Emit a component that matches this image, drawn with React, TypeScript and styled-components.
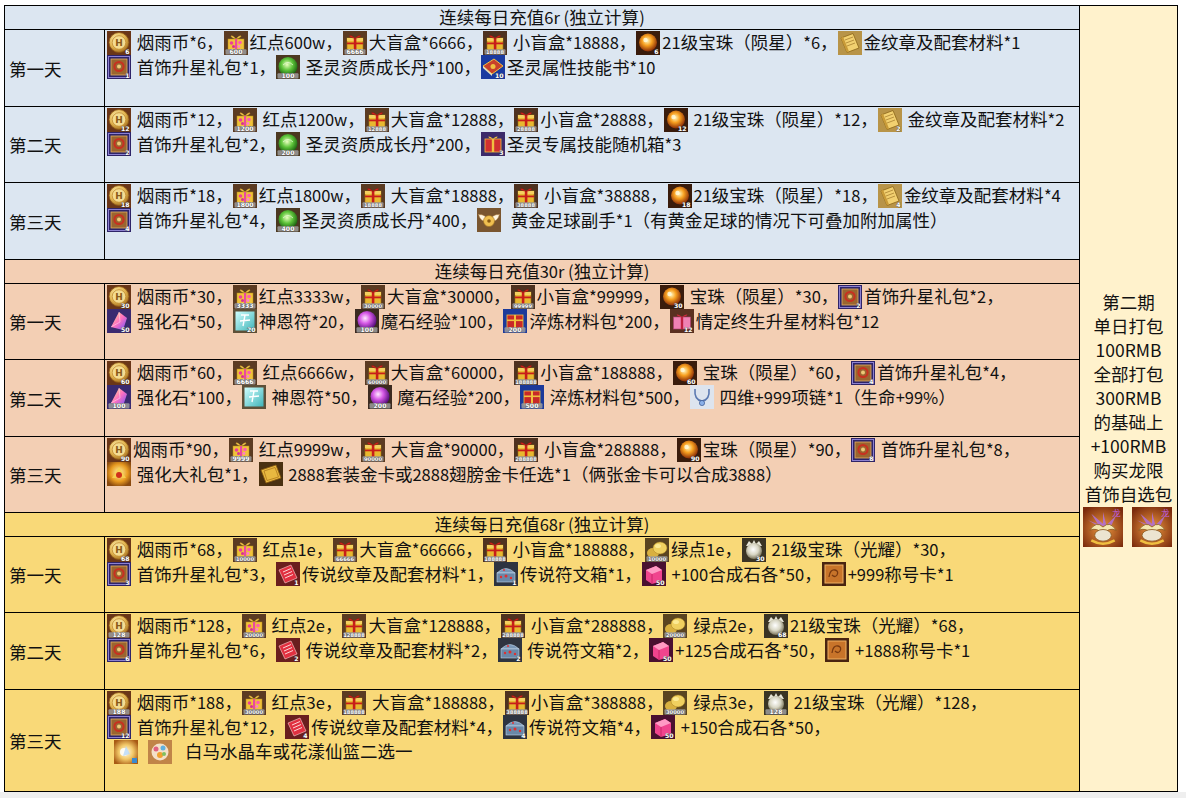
import React, { useId } from 'react';
import styled, { createGlobalStyle } from 'styled-components';

const GlobalStyle = createGlobalStyle`
  html, body { margin: 0; padding: 0; background: #ffffff; }
  body {
    font-family: "Noto Sans CJK SC", "Noto Sans", sans-serif;
    color: #111;
  }
  * { box-sizing: border-box; }
`;

const Page = styled.div`
  padding: 5px 0 0 4px;
`;

const Sheet = styled.div`
  display: flex;
  width: max-content;
  border-top: 1px solid #000;
  border-left: 1px solid #000;
`;

const Main = styled.div`
  display: flex;
  flex-direction: column;
  width: 1075px;
`;

const Section = styled.div<{ $bg: string }>`
  display: flex;
  flex-direction: column;
  background: ${(p) => p.$bg};
`;

const Header = styled.div`
  height: 24px;
  border-right: 1px solid #000;
  border-bottom: 1px solid #000;
  text-align: center;
  font-size: 17.5px;
  line-height: 22px;
  white-space: pre;
`;

const Row = styled.div<{ $h: number }>`
  display: grid;
  grid-template-columns: 100px 975px;
  height: ${(p) => p.$h}px;
`;

const Label = styled.div`
  display: flex;
  align-items: center;
  padding-left: 4px;
  border-right: 1px solid #000;
  border-bottom: 1px solid #000;
  font-size: 17.5px;
`;

const Content = styled.div`
  padding: 0 0 0 2px;
  border-right: 1px solid #000;
  border-bottom: 1px solid #000;
  font-size: 17.5px;
  overflow: hidden;
`;

const Line = styled.div`
  height: 24.5px;
  line-height: 24.5px;
  white-space: pre;
`;

const Latin = styled.span`
  font-size: 16.5px;
`;

const Side = styled.div`
  width: 98px;
  background: #fff2cc;
  border-right: 1px solid #000;
  border-bottom: 1px solid #000;
  display: flex;
  flex-direction: column;
  align-items: center;
  justify-content: center;
  padding-top: 39px;
  font-size: 17.5px;
`;

const SideLine = styled.div`
  line-height: 24px;
  white-space: nowrap;
`;

const SideIcons = styled.div`
  display: flex;
  gap: 7px;
  margin-top: 4px;
`;

const IconSvg = styled.svg`
  display: inline-block;
  vertical-align: middle;
  margin: -3px 2px 0 0;
`;

const Footer = styled.div`
  height: 12px;
  margin-left: -4px;
  background: #efefef;
`;

type Item = [string, string, string];

function Mixed({ text }: { text: string }) {
  const parts = text.split(/([\u0020-\u007e]+)/).filter((p) => p !== '');
  return (
    <>
      {parts.map((p, i) => (/^[\u0020-\u007e]+$/.test(p) ? <Latin key={i}>{p}</Latin> : <React.Fragment key={i}>{p}</React.Fragment>))}
    </>
  );
}

function Num({ n }: { n: string }) {
  if (!n) return null;
  const long = n.length >= 3;
  return (
    <>
      {long && <rect x="1.5" y="18.3" width="21" height="5.2" rx="1" fill="#9c9c9c" opacity="0.85" />}
      <text
        x={long ? 12 : 22.5}
        y="23"
        textAnchor={long ? 'middle' : 'end'}
        fontSize={n.length >= 5 ? 5.2 : 6.2}
        fontFamily="DejaVu Sans"
        fontWeight="bold"
        fill="#fff"
        stroke="#333"
        strokeWidth="0.5"
        paintOrder="stroke"
      >
        {n}
      </text>
    </>
  );
}

function Icon({ kind, n = '', size = 24 }: { kind: string; n?: string; size?: number }) {
  const uid = useId().replace(/[^a-zA-Z0-9]/g, '');
  const g = (s: string) => `${uid}${s}`;
  const u = (s: string) => `url(#${uid}${s})`;
  let body: React.ReactNode = null;
  switch (kind) {
    case 'coin':
      body = (
        <>
          <defs>
            <radialGradient id={g('a')} cx="40%" cy="35%" r="70%">
              <stop offset="0" stopColor="#fff2b8" />
              <stop offset="0.6" stopColor="#e2b450" />
              <stop offset="1" stopColor="#9a6418" />
            </radialGradient>
          </defs>
          <rect width="24" height="24" fill="#6a3618" />
          <circle cx="12" cy="11.5" r="10" fill={u('a')} stroke="#8a5414" strokeWidth="0.8" />
          <circle cx="12" cy="11.5" r="6.8" fill="#f4dc92" stroke="#c08a2c" strokeWidth="0.8" />
          <text x="12" y="15" textAnchor="middle" fontSize="9" fontWeight="bold" fontFamily="DejaVu Sans" fill="#8a5a18">H</text>
        </>
      );
      break;
    case 'redpt':
      body = (
        <>
          <rect width="24" height="24" fill="#5b3b22" />
          <path d="M12 8 C7 2 4 6 12 8 Z M12 8 C17 2 20 6 12 8 Z" fill="#f4d25a" stroke="#c89020" strokeWidth="0.5" />
          <rect x="4" y="8" width="16" height="10.5" fill="#f0c23a" stroke="#b88a18" strokeWidth="0.5" />
          <rect x="11" y="8" width="2.2" height="10.5" fill="#e84aa0" />
          <circle cx="7.5" cy="12" r="1.8" fill="#ee3c9c" />
          <circle cx="16" cy="11.5" r="1.8" fill="#ff5ab0" />
          <circle cx="9.5" cy="15.5" r="1.5" fill="#d83090" />
          <circle cx="15" cy="15.5" r="1.4" fill="#ff80c8" />
        </>
      );
      break;
    case 'bigbox':
    case 'smallbox':
      body = (
        <>
          <rect width="24" height="24" fill={kind === 'bigbox' ? '#5b3b22' : '#4e3220'} />
          <rect x="4" y="7" width="16" height="12" fill="#e8b830" stroke="#a07010" strokeWidth="0.6" />
          <rect x="4" y="7" width="16" height="3" fill="#f4d060" />
          <rect x="10.8" y="7" width="2.6" height="12" fill="#c81e1a" />
          <rect x="4" y="11.5" width="16" height="1.8" fill="#c81e1a" />
          <path d="M12 7.2 C6 1.5 3.5 6.5 12 7.2 Z M12.2 7.2 C18 1.5 20.5 6.5 12.2 7.2 Z" fill="#d8261e" stroke="#8a1010" strokeWidth="0.4" />
        </>
      );
      break;
    case 'orb':
      body = (
        <>
          <defs>
            <radialGradient id={g('a')} cx="45%" cy="40%" r="60%">
              <stop offset="0" stopColor="#fff8c0" />
              <stop offset="0.45" stopColor="#f7a020" />
              <stop offset="1" stopColor="#8a2c06" />
            </radialGradient>
          </defs>
          <rect width="24" height="24" fill="#3a1c0c" />
          <circle cx="12" cy="11.5" r="9" fill={u('a')} />
          <circle cx="9.5" cy="9" r="2.2" fill="#fffbe0" opacity="0.8" />
        </>
      );
      break;
    case 'scroll':
      body = (
        <>
          <rect width="24" height="24" fill="#b89448" />
          <path d="M3 7 L15 2.5 L21 17 L9 21.5 Z" fill="#f2d070" stroke="#8a6418" strokeWidth="0.8" />
          <path d="M7 9 L15 6 M8 12 L16 9 M9 15 L17 12" stroke="#a88030" strokeWidth="0.8" />
          <path d="M3 7 L5 5.5 L11 20.5 L9 21.5 Z" fill="#c89a38" />
        </>
      );
      break;
    case 'frame':
      body = (
        <>
          <rect width="24" height="24" fill="#2e2468" />
          <rect x="1.5" y="1.5" width="21" height="21" fill="none" stroke="#8c80d0" strokeWidth="1" />
          <rect x="4" y="4" width="16" height="16" fill="#9a6530" stroke="#e0b060" strokeWidth="0.8" />
          <circle cx="12" cy="11.5" r="4.6" fill="none" stroke="#c83020" strokeWidth="2" />
          <circle cx="12" cy="11.5" r="2" fill="#ecc878" />
        </>
      );
      break;
    case 'green':
      body = (
        <>
          <defs>
            <radialGradient id={g('a')} cx="45%" cy="40%" r="60%">
              <stop offset="0" stopColor="#eaffc0" />
              <stop offset="0.5" stopColor="#5ec43a" />
              <stop offset="1" stopColor="#1a6010" />
            </radialGradient>
          </defs>
          <rect width="24" height="24" fill="#4b3820" />
          <circle cx="12" cy="11.5" r="9.5" fill={u('a')} />
          <path d="M7 10 Q12 5 17 10" stroke="#f0ffe0" strokeWidth="1" fill="none" opacity="0.7" />
        </>
      );
      break;
    case 'book':
      body = (
        <>
          <rect width="24" height="24" fill="#1a3aa0" />
          <path d="M2 11 L13 4 L22 11 L11 19 Z" fill="#c8402a" stroke="#f0c040" strokeWidth="1" />
          <path d="M2 11 L11 19 L11 21 L2 13 Z" fill="#e8e0c0" />
          <circle cx="12" cy="11.5" r="2.5" fill="#f0c040" />
        </>
      );
      break;
    case 'redchest':
      body = (
        <>
          <rect width="24" height="24" fill="#3c2a6a" />
          <rect x="4" y="7" width="16" height="13" fill="#d03030" stroke="#f0c040" strokeWidth="0.8" />
          <rect x="10.8" y="7" width="2.4" height="13" fill="#f0c040" />
          <path d="M12 7 C7 2 5 6 12 7 Z M12 7 C17 2 19 6 12 7 Z" fill="#f0c040" />
        </>
      );
      break;
    case 'ball':
      body = (
        <>
          <rect width="24" height="24" fill="#7a5630" />
          <path d="M11 12 C6 4 2 8 1.5 6 C3 12 6 14 11 13 Z" fill="#fff6e0" stroke="#c09050" strokeWidth="0.5" />
          <path d="M13 12 C18 4 22 8 22.5 6 C21 12 18 14 13 13 Z" fill="#fff6e0" stroke="#c09050" strokeWidth="0.5" />
          <circle cx="12" cy="13" r="5.5" fill="#f0c050" stroke="#a07020" strokeWidth="0.6" />
          <circle cx="12" cy="13" r="1.8" fill="#8a5a10" />
        </>
      );
      break;
    case 'crystal':
      body = (
        <>
          <defs>
            <linearGradient id={g('a')} x1="0" y1="0" x2="1" y2="1">
              <stop offset="0" stopColor="#ffe880" />
              <stop offset="0.5" stopColor="#ff70c0" />
              <stop offset="1" stopColor="#6a50ff" />
            </linearGradient>
          </defs>
          <rect width="24" height="24" fill="#3a2a70" />
          <path d="M4 18 L12 3 L20 9 L16 21 Z" fill={u('a')} />
          <path d="M12 3 L13 13 L4 18" stroke="#fff" strokeWidth="0.6" fill="none" opacity="0.7" />
        </>
      );
      break;
    case 'rune':
      body = (
        <>
          <defs>
            <linearGradient id={g('a')} x1="0" y1="0" x2="1" y2="1">
              <stop offset="0" stopColor="#d0ffff" />
              <stop offset="1" stopColor="#40b4b8" />
            </linearGradient>
          </defs>
          <rect width="24" height="24" fill="#5e5038" />
          <rect x="2.5" y="2.5" width="19" height="19" fill={u('a')} />
          <path d="M8 6 L16 6 M12 6 L10 17 M7 12 L17 11" stroke="#ffffff" strokeWidth="1.4" fill="none" />
        </>
      );
      break;
    case 'purple':
      body = (
        <>
          <defs>
            <radialGradient id={g('a')} cx="40%" cy="38%" r="62%">
              <stop offset="0" stopColor="#ffe8ff" />
              <stop offset="0.45" stopColor="#d65ae6" />
              <stop offset="1" stopColor="#5a1080" />
            </radialGradient>
          </defs>
          <rect width="24" height="24" fill="#3b2a20" />
          <circle cx="12" cy="11.5" r="9.5" fill={u('a')} />
        </>
      );
      break;
    case 'bluebox':
      body = (
        <>
          <rect width="24" height="24" fill="#1c3a9a" />
          <rect x="4" y="6" width="16" height="14" fill="#c82828" stroke="#f0c040" strokeWidth="0.8" />
          <rect x="4" y="10.5" width="16" height="1.6" fill="#f0c040" />
          <rect x="11" y="6" width="2" height="14" fill="#f0c040" />
        </>
      );
      break;
    case 'pinkbox':
      body = (
        <>
          <rect width="24" height="24" fill="#5a3020" />
          <rect x="3.5" y="8" width="17" height="12" fill="#f082b4" stroke="#b04070" strokeWidth="0.6" />
          <rect x="10.8" y="8" width="2.4" height="12" fill="#c02040" />
          <path d="M12 8 C6 3 4 7 12 8 Z M12 8 C18 3 20 7 12 8 Z" fill="#d0283c" />
        </>
      );
      break;
    case 'necklace':
      body = (
        <>
          <rect width="24" height="24" fill="#dde4ee" />
          <path d="M5 4 Q4 15 12 16 Q20 15 19 4" stroke="#5a78b0" strokeWidth="1.6" fill="none" />
          <circle cx="12" cy="18" r="2.6" fill="#8ab0e8" stroke="#3a5890" strokeWidth="0.7" />
        </>
      );
      break;
    case 'goldgift':
      body = (
        <>
          <defs>
            <radialGradient id={g('a')} cx="50%" cy="45%" r="60%">
              <stop offset="0" stopColor="#fff4a8" />
              <stop offset="0.6" stopColor="#e89a20" />
              <stop offset="1" stopColor="#8a4a10" />
            </radialGradient>
          </defs>
          <rect width="24" height="24" fill={u('a')} />
          <path d="M5 16 L12 5 L19 16 Z" fill="#f6d050" opacity="0.9" />
          <circle cx="12" cy="13" r="3" fill="#d0301c" />
        </>
      );
      break;
    case 'goldcard':
      body = (
        <>
          <rect width="24" height="24" fill="#4a3010" />
          <path d="M2 8 L17 3 L22 16 L7 21 Z" fill="#e8b840" stroke="#8a5a10" strokeWidth="0.8" />
          <path d="M5 9 L16 5.5 L19.5 15 L8 18.5 Z" fill="none" stroke="#a87018" strokeWidth="0.7" />
        </>
      );
      break;
    case 'greenpt':
      body = (
        <>
          <rect width="24" height="24" fill="#5a4420" />
          <ellipse cx="8" cy="15" rx="6" ry="5" fill="#d8b040" />
          <ellipse cx="15" cy="10" rx="7" ry="6" fill="#f0d060" stroke="#a88020" strokeWidth="0.5" />
          <ellipse cx="13" cy="8" rx="3" ry="2" fill="#fff0a0" opacity="0.8" />
        </>
      );
      break;
    case 'silver':
      body = (
        <>
          <defs>
            <radialGradient id={g('a')} cx="45%" cy="40%" r="60%">
              <stop offset="0" stopColor="#ffffff" />
              <stop offset="0.55" stopColor="#d8d6c4" />
              <stop offset="1" stopColor="#7a745a" />
            </radialGradient>
          </defs>
          <rect width="24" height="24" fill="#3a3424" />
          <path d="M4 8 L7 3 L10 6 L12 2 L14 6 L17 3 L20 8 Z" fill="#e8e6d8" />
          <circle cx="12" cy="13" r="8" fill={u('a')} />
        </>
      );
      break;
    case 'redcard':
      body = (
        <>
          <rect width="24" height="24" fill="#6a1e1e" />
          <path d="M3 8 L15 3 L21 16 L9 21 Z" fill="#e03040" stroke="#ffd0d0" strokeWidth="0.6" />
          <path d="M7 10 L15 6.5 M8 13 L16 9.5 M9 16 L17 12.5" stroke="#ffe8e8" strokeWidth="0.9" />
        </>
      );
      break;
    case 'chest':
      body = (
        <>
          <rect width="24" height="24" fill="#2e3440" />
          <path d="M3 11 Q12 2 21 11 Z" fill="#7a98b8" stroke="#c0d4e8" strokeWidth="0.6" />
          <rect x="3" y="11" width="18" height="9" fill="#6a88a8" stroke="#c0d4e8" strokeWidth="0.6" />
          <circle cx="7" cy="15" r="1.2" fill="#e03030" />
          <circle cx="12" cy="14" r="1.5" fill="#e03030" />
          <circle cx="17" cy="16" r="1.2" fill="#e03030" />
          <circle cx="10" cy="8" r="1" fill="#e03030" />
        </>
      );
      break;
    case 'pinkstone':
      body = (
        <>
          <rect width="24" height="24" fill="#4a1030" />
          <path d="M4 8 L14 4 L20 8 L20 19 L10 22 L4 18 Z" fill="#f0448e" />
          <path d="M4 8 L14 4 L20 8 L10 12 Z" fill="#ff9ac4" />
          <path d="M10 12 L10 22" stroke="#c02060" strokeWidth="0.8" />
        </>
      );
      break;
    case 'titlecard':
      body = (
        <>
          <rect width="24" height="24" fill="#4a2410" />
          <rect x="3" y="3" width="18" height="18" fill="#c8742a" stroke="#f0b060" strokeWidth="1" />
          <path d="M7 15 Q8 7 13 8 Q17 9 15 13 Q13 16 10 13" stroke="#7a3a10" strokeWidth="1.3" fill="none" />
        </>
      );
      break;
    case 'carriage':
      body = (
        <>
          <defs>
            <radialGradient id={g('a')} cx="50%" cy="50%" r="60%">
              <stop offset="0" stopColor="#fffbe8" />
              <stop offset="0.5" stopColor="#f2c868" />
              <stop offset="1" stopColor="#a85a14" />
            </radialGradient>
          </defs>
          <rect width="24" height="24" fill={u('a')} />
          <circle cx="10" cy="12" r="4" fill="#ffffff" opacity="0.85" />
          <path d="M12 6 L16 14 L9 16 Z" fill="#b8d8f8" opacity="0.8" />
          <rect x="18" y="18" width="5" height="5" fill="#3a8ad0" />
        </>
      );
      break;
    case 'basket':
      body = (
        <>
          <rect width="24" height="24" fill="#c08448" />
          <circle cx="12" cy="12" r="8.5" fill="#f4e0c8" />
          <circle cx="8" cy="9" r="2.5" fill="#e06080" />
          <circle cx="15" cy="8" r="2.5" fill="#60b0e0" />
          <circle cx="12" cy="15" r="3" fill="#f0a030" />
          <circle cx="16" cy="14" r="2" fill="#80c060" />
        </>
      );
      break;
    case 'dragon1':
    case 'dragon2':
      body = (
        <>
          <defs>
            <radialGradient id={g('a')} cx="50%" cy="55%" r="65%">
              <stop offset="0" stopColor="#f09a40" />
              <stop offset="1" stopColor="#7a2a0c" />
            </radialGradient>
          </defs>
          <rect width="24" height="24" fill={u('a')} />
          <path d="M3 8 L10 12 L5 4 L12 10 L12 3 L14 11 L20 5 L16 13 Z" fill="#b070d0" opacity="0.9" />
          <path d="M4 14 Q8 8 12 12 Q16 8 20 14 Q16 12 12 16 Q8 12 4 14 Z" fill="#f4e8b0" stroke="#8a5a20" strokeWidth="0.5" />
          <ellipse cx="12" cy="17" rx={kind === 'dragon1' ? 5 : 6} ry="3.5" fill="#ece4d0" stroke="#8a5a20" strokeWidth="0.5" />
          <path d="M5 20 Q12 24 19 20" stroke="#f0c040" strokeWidth="1.5" fill="none" />
          <text x="22.5" y="5.5" textAnchor="end" fontSize="5" fill="#c060e0" fontFamily="Noto Sans CJK SC">龙</text>
        </>
      );
      break;
    default:
      body = <rect width="24" height="24" fill="#888" />;
  }
  return (
    <IconSvg width={size} height={size} viewBox="0 0 24 24">
      {body}
      <Num n={n} />
    </IconSvg>
  );
}

type DayRow = { day: string; h: number; lines: Item[][] };
type SectionData = { title: string; bg: string; rows: DayRow[] };

const sections: SectionData[] = [
  {
    title: '连续每日充值6r (独立计算)',
    bg: '#dce6f1',
    rows: [
      {
        day: '第一天',
        h: 77,
        lines: [
          [
            ['coin', '6', ' 烟雨币*6，'],
            ['redpt', '600', '红点600w，'],
            ['bigbox', '6666', '大盲盒*6666，'],
            ['smallbox', '18888', ' 小盲盒*18888，'],
            ['orb', '6', '21级宝珠（陨星）*6，'],
            ['scroll', '', '金纹章及配套材料*1'],
          ],
          [
            ['frame', '1', ' 首饰升星礼包*1，'],
            ['green', '100', ' 圣灵资质成长丹*100，'],
            ['book', '10', '圣灵属性技能书*10'],
          ],
        ],
      },
      {
        day: '第二天',
        h: 76,
        lines: [
          [
            ['coin', '12', ' 烟雨币*12，'],
            ['redpt', '1200', ' 红点1200w，'],
            ['bigbox', '12888', '大盲盒*12888，'],
            ['smallbox', '28888', '小盲盒*28888，'],
            ['orb', '12', ' 21级宝珠（陨星）*12，'],
            ['scroll', '2', ' 金纹章及配套材料*2'],
          ],
          [
            ['frame', '2', ' 首饰升星礼包*2，'],
            ['green', '200', ' 圣灵资质成长丹*200，'],
            ['redchest', '3', '圣灵专属技能随机箱*3'],
          ],
        ],
      },
      {
        day: '第三天',
        h: 77,
        lines: [
          [
            ['coin', '18', ' 烟雨币*18，'],
            ['redpt', '1800', '红点1800w，'],
            ['bigbox', '18888', ' 大盲盒*18888，'],
            ['smallbox', '38888', ' 小盲盒*38888，'],
            ['orb', '18', '21级宝珠（陨星）*18，'],
            ['scroll', '4', '金纹章及配套材料*4'],
          ],
          [
            ['frame', '4', ' 首饰升星礼包*4，'],
            ['green', '400', '圣灵资质成长丹*400，'],
            ['ball', '', '  黄金足球副手*1（有黄金足球的情况下可叠加附加属性）'],
          ],
        ],
      },
    ],
  },
  {
    title: '连续每日充值30r (独立计算)',
    bg: '#f3cfb4',
    rows: [
      {
        day: '第一天',
        h: 76,
        lines: [
          [
            ['coin', '30', ' 烟雨币*30，'],
            ['redpt', '3333', '红点3333w，'],
            ['bigbox', '30000', '大盲盒*30000，'],
            ['smallbox', '99999', '小盲盒*99999，'],
            ['orb', '30', ' 宝珠（陨星）*30，'],
            ['frame', '2', '首饰升星礼包*2，'],
          ],
          [
            ['crystal', '50', ' 强化石*50，'],
            ['rune', '20', '神恩符*20，'],
            ['purple', '100', '魔石经验*100，'],
            ['bluebox', '200', '淬炼材料包*200，'],
            ['pinkbox', '12', '情定终生升星材料包*12'],
          ],
        ],
      },
      {
        day: '第二天',
        h: 77,
        lines: [
          [
            ['coin', '60', ' 烟雨币*60，'],
            ['redpt', '6666', ' 红点6666w，'],
            ['bigbox', '60000', '大盲盒*60000，'],
            ['smallbox', '188888', '小盲盒*188888，'],
            ['orb', '60', ' 宝珠（陨星）*60，'],
            ['frame', '4', '首饰升星礼包*4，'],
          ],
          [
            ['crystal', '100', ' 强化石*100，'],
            ['rune', '', ' 神恩符*50，'],
            ['purple', '200', ' 魔石经验*200，'],
            ['bluebox', '500', ' 淬炼材料包*500，'],
            ['necklace', '', ' 四维+999项链*1（生命+99%）'],
          ],
        ],
      },
      {
        day: '第三天',
        h: 76,
        lines: [
          [
            ['coin', '90', '烟雨币*90，'],
            ['redpt', '9999', ' 红点9999w，'],
            ['bigbox', '90000', ' 大盲盒*90000，'],
            ['smallbox', '288888', ' 小盲盒*288888，'],
            ['orb', '90', '宝珠（陨星）*90，'],
            ['frame', '8', ' 首饰升星礼包*8，'],
          ],
          [
            ['goldgift', '', ' 强化大礼包*1，'],
            ['goldcard', '', ' 2888套装金卡或2888翅膀金卡任选*1（俩张金卡可以合成3888）'],
          ],
        ],
      },
    ],
  },
  {
    title: '连续每日充值68r (独立计算)',
    bg: '#f9d978',
    rows: [
      {
        day: '第一天',
        h: 76,
        lines: [
          [
            ['coin', '68', ' 烟雨币*68，'],
            ['redpt', '10000', ' 红点1e，'],
            ['bigbox', '66666', '大盲盒*66666，'],
            ['smallbox', '188888', ' 小盲盒*188888，'],
            ['greenpt', '10000', '绿点1e，'],
            ['silver', '30', ' 21级宝珠（光耀）*30，'],
          ],
          [
            ['frame', '3', ' 首饰升星礼包*3，'],
            ['redcard', '1', '传说纹章及配套材料*1，'],
            ['chest', '1', '传说符文箱*1，'],
            ['pinkstone', '50', ' +100合成石各*50，'],
            ['titlecard', '', '+999称号卡*1'],
          ],
        ],
      },
      {
        day: '第二天',
        h: 77,
        lines: [
          [
            ['coin', '128', ' 烟雨币*128，'],
            ['redpt', '20000', ' 红点2e，'],
            ['bigbox', '128888', '大盲盒*128888，'],
            ['smallbox', '288888', ' 小盲盒*288888，'],
            ['greenpt', '20000', ' 绿点2e，'],
            ['silver', '68', '21级宝珠（光耀）*68，'],
          ],
          [
            ['frame', '6', ' 首饰升星礼包*6，'],
            ['redcard', '2', ' 传说纹章及配套材料*2，'],
            ['chest', '2', ' 传说符文箱*2，'],
            ['pinkstone', '50', '+125合成石各*50，'],
            ['titlecard', '', ' +1888称号卡*1'],
          ],
        ],
      },
      {
        day: '第三天',
        h: 102,
        lines: [
          [
            ['coin', '188', ' 烟雨币*188，'],
            ['redpt', '30000', ' 红点3e，'],
            ['bigbox', '188888', ' 大盲盒*188888，'],
            ['smallbox', '388888', '小盲盒*388888，'],
            ['greenpt', '30000', ' 绿点3e，'],
            ['silver', '128', ' 21级宝珠（光耀）*128，'],
          ],
          [
            ['frame', '12', ' 首饰升星礼包*12，'],
            ['redcard', '4', '传说纹章及配套材料*4，'],
            ['chest', '4', '传说符文箱*4，'],
            ['pinkstone', '50', ' +150合成石各*50，'],
          ],
          [
            ['', '', '  '],
            ['carriage', '', '  '],
            ['basket', '', '   白马水晶车或花漾仙篮二选一'],
          ],
        ],
      },
    ],
  },
];

const sideLines = ['第二期', '单日打包', '100RMB', '全部打包', '300RMB', '的基础上', '+100RMB', '购买龙限', '首饰自选包'];

export default function App() {
  return (
    <>
      <GlobalStyle />
      <Page>
        <Sheet>
          <Main>
            {sections.map((s) => (
              <Section key={s.title} $bg={s.bg}>
                <Header>
                  <Mixed text={s.title} />
                </Header>
                {s.rows.map((r) => (
                  <Row key={r.day} $h={r.h}>
                    <Label>{r.day}</Label>
                    <Content>
                      {r.lines.map((line, li) => (
                        <Line key={li}>
                          {line.map(([kind, n, text], ii) => (
                            <React.Fragment key={ii}>
                              {kind && <Icon kind={kind} n={n} />}
                              <Mixed text={text} />
                            </React.Fragment>
                          ))}
                        </Line>
                      ))}
                    </Content>
                  </Row>
                ))}
              </Section>
            ))}
          </Main>
          <Side>
            {sideLines.map((t) => (
              <SideLine key={t}>{t}</SideLine>
            ))}
            <SideIcons>
              <Icon kind="dragon1" size={40} />
              <Icon kind="dragon2" size={40} />
            </SideIcons>
          </Side>
        </Sheet>
        <Footer />
      </Page>
    </>
  );
}
